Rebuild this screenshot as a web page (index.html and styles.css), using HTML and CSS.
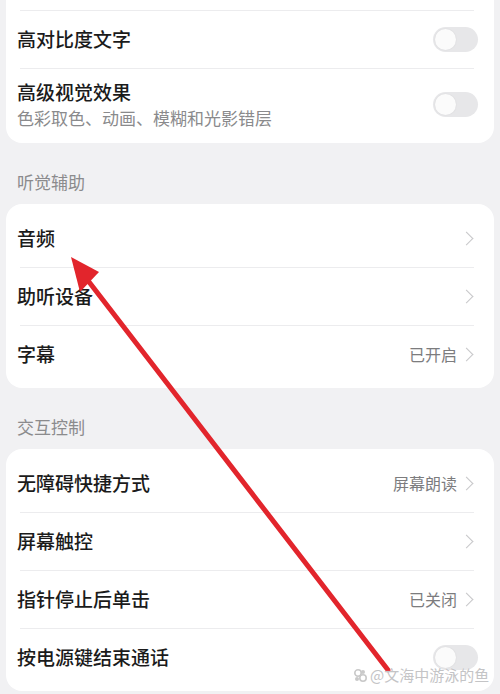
FILE: index.html
```html
<!DOCTYPE html>
<html lang="zh-CN">
<head>
    <meta charset="UTF-8">
    <meta name="viewport" content="width=device-width, initial-scale=1.0">
    <title>辅助功能</title>
    <link rel="stylesheet" href="styles.css">
</head>
<body>
    <main class="page">
        <section class="card card-top">
            <div class="row row-spacer"></div>
            <div class="row">
                <span class="title">高对比度文字</span>
                <span class="switch"></span>
            </div>
            <div class="row row-tall">
                <div class="text">
                    <span class="title">高级视觉效果</span>
                    <span class="sub">色彩取色、动画、模糊和光影错层</span>
                </div>
                <span class="switch"></span>
            </div>
        </section>

        <h2 class="group-label">听觉辅助</h2>
        <section class="card">
            <div class="row">
                <span class="title">音频</span>
                <span class="chevron"></span>
            </div>
            <div class="row">
                <span class="title">助听设备</span>
                <span class="chevron"></span>
            </div>
            <div class="row">
                <span class="title">字幕</span>
                <span class="value">已开启</span>
                <span class="chevron"></span>
            </div>
        </section>

        <h2 class="group-label">交互控制</h2>
        <section class="card">
            <div class="row">
                <span class="title">无障碍快捷方式</span>
                <span class="value">屏幕朗读</span>
                <span class="chevron"></span>
            </div>
            <div class="row">
                <span class="title">屏幕触控</span>
                <span class="chevron"></span>
            </div>
            <div class="row">
                <span class="title">指针停止后单击</span>
                <span class="value">已关闭</span>
                <span class="chevron"></span>
            </div>
            <div class="row">
                <span class="title">按电源键结束通话</span>
                <span class="switch"></span>
            </div>
        </section>
    </main>

    <!-- red pointer drawn over the list -->
    <svg class="pointer" width="500" height="694" viewBox="0 0 500 694">
        <line x1="86" y1="278" x2="388" y2="670" stroke="#e2252c" stroke-width="5" stroke-linecap="round"/>
        <polygon points="71,257 99,272 80,292" fill="#e2252c"/>
    </svg>

    <div class="watermark">
        <svg width="15" height="15" viewBox="0 0 15 15">
            <circle cx="5" cy="5" r="3.2" fill="none" stroke="#c9c9c9" stroke-width="1.6"/>
            <circle cx="10" cy="10" r="3.2" fill="none" stroke="#c9c9c9" stroke-width="1.6"/>
            <circle cx="10" cy="4" r="2" fill="#c9c9c9"/>
            <circle cx="4" cy="11" r="2" fill="#c9c9c9"/>
        </svg>
        <span>@文海中游泳的鱼</span>
    </div>
</body>
</html>
```

FILE: styles.css
```css
body {
    margin: 0;
    background: #f1f1f3;
    font-family: "Noto Sans CJK SC", "Noto Sans", sans-serif;
    color: #1b1b1b;
    overflow: hidden;
}
.page {
    padding: 0 6px;
}
.card {
    background: #ffffff;
    border-radius: 16px;
    padding: 5px 0;
}
.card-top {
    margin-top: -53px;
    padding-bottom: 4px;
}
.row {
    position: relative;
    display: flex;
    align-items: center;
    height: 58px;
    padding: 0 16px 0 11px;
}
.row + .row::before {
    content: "";
    position: absolute;
    top: 0;
    left: 14px;
    right: 20px;
    border-top: 1px solid #ececee;
}
.row-tall {
    height: auto;
    padding-top: 12px;
    padding-bottom: 10px;
}
.text {
    display: flex;
    flex-direction: column;
    gap: 3px;
}
.title {
    flex: 1;
    font-size: 19px;
    line-height: 24px;
    font-weight: 500;
}
.sub {
    font-size: 17px;
    line-height: 22px;
    color: #8a8a8c;
}
.text + .switch {
    margin-left: auto;
}
.value {
    font-size: 16px;
    color: #7c7c7e;
    margin-right: 5px;
}
.chevron {
    width: 8px;
    height: 8px;
    border-top: 1.6px solid #c9c9cb;
    border-right: 1.6px solid #c9c9cb;
    transform: rotate(45deg) scale(1.1);
    margin-right: 7px;
}
.switch {
    position: relative;
    width: 45px;
    height: 25px;
    border-radius: 13px;
    background: #e7e7e9;
}
.switch::after {
    content: "";
    position: absolute;
    top: 2px;
    left: 2px;
    width: 21px;
    height: 21px;
    border-radius: 50%;
    background: #fbfbfb;
    box-shadow: 0 0 2px rgba(0, 0, 0, 0.08);
}
.group-label {
    margin: 0;
    padding: 27px 11px 10px;
    font-size: 17px;
    line-height: 24px;
    font-weight: 400;
    color: #8b8b8d;
}
.pointer {
    position: absolute;
    top: 0;
    left: 0;
    pointer-events: none;
}
.watermark {
    position: absolute;
    left: 353px;
    top: 666px;
    display: flex;
    align-items: center;
    gap: 2px;
    font-size: 15px;
    line-height: 18px;
    color: #c4c4c6;
    text-shadow: 0 0 1px #ffffff;
}
```
